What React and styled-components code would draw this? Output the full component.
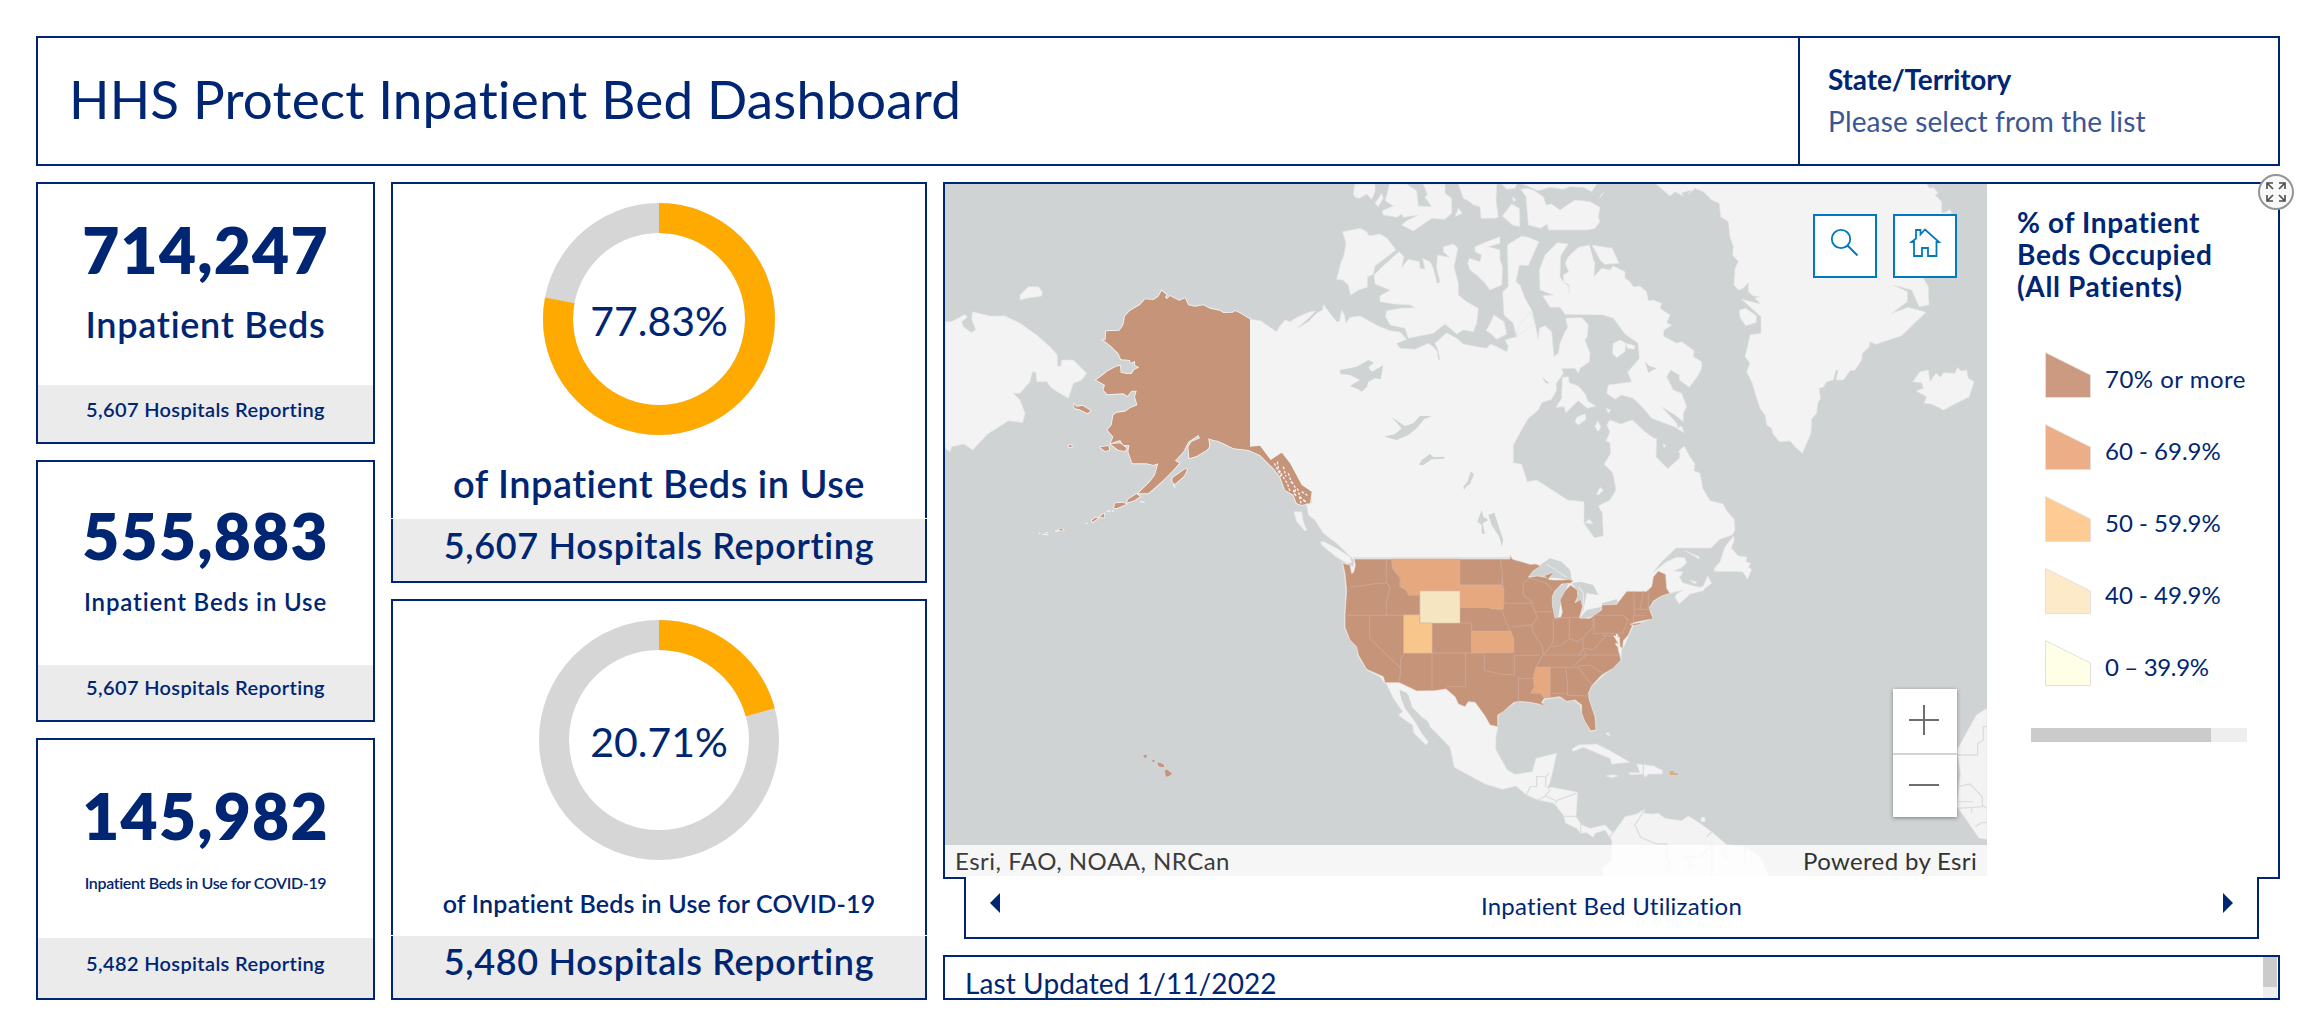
import React from "react";
import styled, { createGlobalStyle } from "styled-components";

const navy = "#002673";
const brown = "#c69479";
const water = "#cfd3d4";
const land = "#f3f3f3";

const Global = createGlobalStyle`
  * { box-sizing: border-box; }
  body { margin: 0; background: #fff; color: ${navy}; font-family: Lato, "Open Sans", sans-serif; }
`;

const Page = styled.div`
  width: 2308px;
  height: 1020px;
  padding: 36px 28px 20px 36px;
  display: flex;
  flex-direction: column;
  gap: 16px;
  overflow: hidden;
`;

const Text = styled.div`
  flex: none;
  white-space: nowrap;
  font-size: ${(p) => p.$size}px;
  font-weight: ${(p) => p.$weight || 400};
  line-height: ${(p) => p.$line || p.$size}px;
  letter-spacing: ${(p) => p.$track || 0}px;
  margin-top: ${(p) => p.$gap || 0}px;
  color: ${(p) => p.$color || "inherit"};
`;

const Box = styled.section`
  border: 2px solid ${navy};
  background: #fff;
`;

/* ---------- header ---------- */
const Header = styled(Box)`
  height: 130px;
  flex: none;
  display: flex;
`;
const TitleArea = styled.div`
  flex: 1;
  display: flex;
  align-items: center;
  padding: 0 0 5px 31px;
`;
const Selector = styled.div`
  width: 480px;
  border-left: 2px solid ${navy};
  padding: 25px 0 0 28px;
`;

/* ---------- columns ---------- */
const Body = styled.main`
  height: 818px;
  display: grid;
  grid-template-columns: 339px 536px 1337px;
  gap: 16px;
`;
const Column = styled.div`
  display: flex;
  flex-direction: column;
  gap: ${(p) => (p.$gap === undefined ? 16 : p.$gap)}px;
  min-width: 0;
`;
const Card = styled(Box)`
  flex: none;
  height: ${(p) => p.$height}px;
  display: flex;
  flex-direction: column;
  align-items: center;
  padding-top: ${(p) => p.$top}px;
`;
const Footer = styled.div`
  align-self: stretch;
  margin-top: auto;
  height: ${(p) => p.$height}px;
  padding-top: ${(p) => p.$top}px;
  background: #ebebeb;
  display: flex;
  justify-content: center;
  align-items: flex-start;
`;
const Rule = styled.div`
  align-self: stretch;
  height: 1px;
  margin: auto -2px 0;
  background: #fff;
  & + ${Footer} { margin-top: 0; }
`;
const Donut = styled.div`
  display: grid;
  place-items: center;
  width: ${(p) => p.$size}px;
  height: ${(p) => p.$size}px;
  > * { grid-area: 1 / 1; }
`;
const Percent = styled(Text)`
  padding-top: 2px;
`;

function Ring({ outer, inner, share }) {
  const r = (outer + inner) / 2;
  const c = 2 * Math.PI * r;
  return (
    <svg width={outer * 2} height={outer * 2} viewBox={`${-outer} ${-outer} ${outer * 2} ${outer * 2}`}>
      <circle r={r} fill="none" stroke="#d6d6d6" strokeWidth={outer - inner} />
      <circle r={r} fill="none" stroke="#ffaa00" strokeWidth={outer - inner}
        strokeDasharray={`${c * share} ${c}`} transform="rotate(-90)" />
    </svg>
  );
}

/* ---------- map ---------- */
const MapPanel = styled(Box)`
  position: relative;
  height: 697px;
  flex: none;
  display: flex;
`;
const MapView = styled.div`
  position: relative;
  width: 1042px;
  height: 692px;
  background: ${water};
  overflow: hidden;
`;
const MapSvg = styled.svg`
  display: block;
`;
const Tools = styled.div`
  position: absolute;
  top: 30px;
  right: 30px;
  display: flex;
  gap: 16px;
`;
const Tool = styled.button`
  width: 64px;
  height: 64px;
  padding: 0;
  border: 2px solid #0079c1;
  background: #fff;
  svg { display: block; margin: -2px; }
`;
const Zoom = styled.div`
  position: absolute;
  right: 30px;
  top: 505px;
  width: 64px;
  background: #fff;
  box-shadow: 0 1px 4px rgba(0, 0, 0, 0.4);
`;
const ZoomButton = styled.div`
  height: ${(p) => (p.$divided ? 66 : 62)}px;
  border-bottom: ${(p) => (p.$divided ? "2px solid #d4d4d4" : "0")};
  svg { display: block; }
`;
const Attribution = styled.div`
  position: absolute;
  left: 0;
  right: 0;
  bottom: 0;
  height: 31px;
  padding: 0 10px;
  display: flex;
  justify-content: space-between;
  align-items: center;
  background: rgba(255, 255, 255, 0.8);
`;
const Expand = styled.div`
  position: absolute;
  top: -10px;
  right: -16px;
  width: 36px;
  height: 36px;
  border-radius: 50%;
  border: 2px solid #959595;
  background: #f8f8f8;
  display: grid;
  place-items: center;
`;

const Legend = styled.aside`
  flex: 1;
  padding: 22px 0 0 30px;
`;
const LegendList = styled.div`
  margin: 37px 0 29px 28px;
`;
const LegendRow = styled.div`
  height: 72px;
  display: flex;
  align-items: center;
  gap: 14px;
`;
const LegendLabel = styled(Text)`
  padding-top: 8px;
`;
const HScroll = styled.div`
  width: 216px;
  height: 14px;
  margin-left: 14px;
  background: #eee;
  &::before { content: ""; display: block; width: 180px; height: 14px; background: #cbcbcb; }
`;
const Tab = styled.div`
  position: relative;
  flex: none;
  height: 62px;
  margin: -2px 21px 0;
  padding: 0 24px 2px;
  border: 2px solid ${navy};
  border-top: 0;
  background: #fff;
  display: flex;
  align-items: center;
  justify-content: space-between;
`;
const Arrow = styled.svg`
  margin-bottom: 6px;
`;
const Updated = styled(Box)`
  height: 45px;
  margin-top: 16px;
  display: flex;
  justify-content: space-between;
  padding: 0 1px 0 20px;
  overflow: hidden;
`;
const VScroll = styled.div`
  width: 14px;
  height: 41px;
  background: #eee;
  &::before { content: ""; display: block; height: 30px; background: #cbcbcb; }
`;

/* Coordinates of the basemap are in thirds of a pixel. */
const landShapes = [
  // North and Central America, South America
  "-150,418 -118,422 -100,435 -70,455 -62,440 -45,420 -30,425 -5,410 30,395 47,393 20,420 -10,445 0,440 25,425 50,400 68,390 70,373 90,400 110,425 118,425 125,390 133,405 138,430 150,412 180,408 235,438 270,452 300,456 320,478 290,490 300,505 345,508 385,490 400,500 412,515 415,540 420,540 415,512 405,490 440,458 470,475 490,492 530,500 560,505 572,492 590,500 620,515 625,500 615,480 650,470 655,440 690,395 705,430 715,480 718,445 735,437 755,455 762,530 775,520 780,490 795,455 803,443 797,415 845,412 865,435 862,470 855,480 870,520 868,545 840,565 835,580 825,565 785,566 790,580 768,612 770,630 755,658 725,668 715,690 685,715 670,740 640,795 640,848 665,853 682,905 710,900 803,960 852,965 852,1030 883,1073 910,1068 907,1000 895,978 930,960 948,930 938,878 912,853 932,820 930,788 918,783 930,755 920,735 930,720 962,732 997,720 1035,755 1062,775 1070,775 1068,830 1103,866 1138,835 1140,820 1135,815 1152,798 1170,830 1185,852 1182,872 1200,880 1208,925 1230,962 1270,972 1278,990 1303,1018 1305,1050 1297,1065 1260,1078 1233,1104 1128,1104 1085,1145 1057,1180 1075,1165 1100,1145 1130,1132 1155,1133 1160,1148 1145,1163 1120,1173 1148,1175 1145,1185 1138,1190 1148,1208 1170,1215 1200,1222 1210,1218 1223,1187 1235,1210 1215,1225 1210,1232 1170,1242 1138,1272 1125,1252 1130,1242 1150,1230 1110,1240 1085,1248 1060,1265 1047,1285 1060,1315 1020,1328 998,1340 985,1370 972,1400 965,1405 963,1440 940,1465 910,1485 875,1520 866,1540 870,1570 886,1610 888,1652 872,1655 855,1625 845,1600 840,1575 820,1560 800,1565 780,1552 755,1555 735,1558 725,1575 690,1567 650,1565 635,1575 595,1605 593,1645 588,1670 587,1708 622,1770 645,1783 697,1775 708,1735 770,1720 757,1780 748,1812 740,1825 757,1822 833,1837 828,1910 845,1935 870,1945 915,1935 930,1950 940,1960 975,1910 1010,1902 1035,1887 1032,1900 1055,1902 1075,1900 1095,1915 1145,1922 1165,1908 1200,1930 1235,1955 1279,1993 1334,2000 1380,2030 1407,2088 908,2088 908,2065 935,2040 935,1980 915,1950 885,1960 880,1972 860,1958 842,1960 830,1945 797,1930 790,1905 762,1870 715,1860 680,1845 648,1818 608,1828 555,1812 463,1762 450,1702 410,1660 390,1640 385,1625 365,1610 335,1580 325,1545 300,1530 305,1560 315,1585 345,1625 365,1660 385,1685 378,1695 342,1660 338,1635 315,1620 295,1605 308,1595 280,1555 260,1512 253,1508 240,1490 200,1470 172,1425 172,1400 150,1380 133,1342 134,1305 138,1230 133,1180 126,1148 160,1160 162,1140 110,1090 70,1060 45,1020 25,1005 20,975 35,970 35,935 0,910 -50,820 -90,840 -120,797 -150,800",
  // Vancouver Island, Haida Gwaii
  "62,1085 72,1085 110,1105 150,1130 155,1148 140,1150 105,1128 65,1095",
  "-18,995 5,995 10,1025 20,1050 15,1053 -10,1025",
  // Arctic Canada
  "128,155 165,148 180,145 200,155 207,168 240,162 262,175 288,210 225,258 220,283 203,290 202,322 175,330 152,345 145,315 128,300 110,298 122,250 132,225 138,190",
  "297,215 312,230 305,262 325,238 358,245 360,265 375,268 368,235 390,245 400,265 412,312 420,305 410,265 412,225 448,232 430,215 430,200 460,192 474,205 462,260 475,310 475,345 500,365 535,385 530,430 520,455 490,450 470,462 435,432 400,460 325,475 315,445 270,435 257,410 260,392 300,385 345,383 330,375 280,372 240,365 240,348 270,330 225,312 222,285 245,262",
  "525,200 560,185 600,170 600,190 565,200 600,210 600,240 608,260 605,315 570,330 555,310 530,285 510,270 503,250 508,235 540,245 545,225 525,215",
  "622,195 665,168 685,172 717,185 685,257 658,255 648,305 660,315 675,355 695,390 705,430 650,470 640,430 612,405 608,335 625,320",
  "568,435 582,405 612,425 620,462 590,478 572,460 558,452",
  "160,40 165,12 225,12 225,35 215,58 200,42 178,55 165,52", "245,40 250,55 235,80 225,70",
  "262,40 268,12 320,12 350,32 355,78 395,80 375,52 382,42 370,12 435,12 435,40 455,55 455,100 435,118 395,115 340,153 305,135 320,122 355,105 310,112 305,102 290,112 250,105 247,92 280,78 255,62",
  "475,12 590,12 588,60 595,112 583,115 543,115 540,80 520,75 510,65 490,55", "475,85 487,100 465,110",
  "635,72 658,85 660,140 637,135 607,108", "605,12 650,12 645,25 620,28", "637,50 648,60 640,65",
  "662,28 680,25 700,30 730,50 738,75 755,72 780,90 825,60 870,65 900,82 895,110 900,125 885,145 865,150 745,150 742,132 722,145 685,135 678,50",
  "668,12 890,12 875,35 850,22 810,20 790,28 750,22 715,32", "912,38 898,55 905,42",
  "735,225 772,188 805,192 782,228 780,290 790,305 808,320 808,340 808,315 790,305 790,285 806,275 795,250 805,230 835,202 868,195 885,240 882,290 905,265 930,270 940,258 975,275 975,295 990,305 1000,320 1020,318 1040,335 1045,362 1060,360 1085,370 1080,385 1110,405 1100,428 1115,435 1092,450 1090,468 1130,490 1145,485 1182,512 1180,530 1205,545 1205,565 1192,590 1168,622 1138,600 1138,585 1112,570 1100,590 1120,630 1145,640 1160,680 1150,700 1150,725 1125,705 1085,680 1130,730 1135,745 1055,715 1035,690 1000,655 965,645 945,658 920,640 925,615 995,605 983,577 1018,535 1014,490 975,462 940,415 910,405 795,403 780,382 750,382 728,347 760,345 720,330 718,270",
  "875,195 937,205 957,250 915,253 900,240 890,220",
  "787,592 805,590 808,608 835,618 858,645 862,662 887,678 862,685 835,662 797,698 793,680 768,682 785,655",
  "825,725 830,712 855,702 858,718 835,735", "885,740 893,722 903,740 895,755", "940,490 960,480 978,490 975,515 950,533 937,520",
  "978,490 1005,497 1003,508 982,505", "890,942 900,922 910,930 895,946", "855,1028 868,1018 880,1032", "918,685 932,690 925,700", "1130,745 1145,738 1152,758",
  "1088,792 1097,795 1093,803",
  // Gulf of St Lawrence
  "1155,1112 1198,1130 1197,1137", "1168,1200 1190,1205 1185,1212",
  "1300,1068 1303,1080 1294,1105 1315,1128 1340,1130 1338,1145 1352,1150 1345,1162 1355,1168 1343,1198 1328,1175 1243,1174 1243,1165 1260,1145 1275,1100",
  // Greenland
  "1068,12 1110,48 1125,35 1150,48 1145,38 1175,30 1165,42 1185,25 1210,35 1235,60 1258,70 1262,110 1285,125 1290,170 1300,200 1298,225 1315,245 1305,265 1302,315 1315,330 1330,325 1345,308 1345,335 1360,348 1380,350 1365,355 1382,372 1325,358 1383,410 1383,460 1350,465 1345,490 1335,530 1350,550 1340,575 1358,612 1370,655 1380,685 1395,705 1400,735 1415,745 1418,760 1438,785 1470,783 1490,805 1507,820 1533,760 1535,717 1550,700 1553,670 1562,655 1557,625 1570,622 1580,605 1600,600 1607,572 1615,570 1608,600 1630,600 1650,572 1665,570 1685,540 1687,520 1708,500 1708,485 1728,493 1805,467 1845,428 1878,397 1825,382 1775,400 1822,365 1822,335 1780,315 1800,320 1835,330 1858,380 1887,375 1885,320 1870,295 1860,250 1880,160 1926,105 1955,100 1950,88 1935,98 1925,98 1925,65 1905,45 1915,40 1900,22 1888,25 1880,12",
  "1318,390 1337,385 1370,408 1368,428 1337,437 1320,412",
  // Iceland
  "1838,605 1860,575 1885,570 1890,605 1908,580 1922,592 1930,578 1965,580 1973,562 1982,573 2000,570 2005,595 2022,605 2008,650 1930,690 1895,672 1872,670 1880,650 1848,633 1870,625 1865,608",
  // Chukotka, Wrangel Island
  "-1065,425 -1045,425 -1005,403 -998,412 -1015,425 -1010,440 -985,458 -973,448 -985,418 -983,395 -930,408 -885,408 -840,430 -790,465 -750,500 -728,525 -728,558 -718,560 -715,540 -680,540 -640,580 -655,600 -680,610 -688,635 -695,655 -745,625 -760,605 -790,605 -792,577 -803,575 -810,605 -840,640 -860,640 -840,660 -825,700 -832,728 -875,722 -938,763 -982,810 -1008,792 -1045,800 -1050,815 -1065,805",
  "-840,345 -815,320 -785,320 -773,335 -775,348 -820,355 -840,360",
  // Caribbean
  "815,1708 835,1695 890,1692 930,1712 990,1747 935,1752 930,1735 905,1725 850,1702 820,1714", "985,1778 1020,1778 1010,1752 1060,1757 1088,1772 1086,1782 1045,1782 1037,1792 1030,1782 990,1784", "918,1788 940,1784 955,1788 935,1793", "1203,1912 1215,1912 1215,1925 1203,1925", "918,1662 925,1656 930,1668",
  // West Africa
  "2061,1585 2029,1605 1971,1710 1981,1780 1971,1880 2000,1920 2037,1975 2061,1978",
];

const waterShapes = [
  "120,570 170,560 205,540 222,548 205,562 215,575 250,556 245,580 242,598 225,595 205,605 200,622 185,635 175,628 150,618 180,600 150,585 122,582",
  "275,712 315,738 340,730 360,708 395,708 372,718 350,745 325,765 290,780 252,770 285,762 305,745",
  "357,855 365,840 390,822 400,832 433,830 433,836 395,838 370,855", "512,875 522,882 510,912 500,918 492,930 490,920 502,905",
  "565,1005 583,998 600,1050 610,1080 605,1100 598,1070 575,1035", "545,990 550,1010 565,1020 548,1030 555,1062 545,1060 545,1035 532,1025",
  "1035,545 1048,558 1070,565 1045,578", "725,590 748,610 738,610",
  "685,1190 700,1172 720,1155 750,1135 785,1145 810,1170 815,1200 775,1195 740,1192 725,1190 690,1188",
  "758,1250 768,1230 795,1208 805,1212 790,1245 780,1280 775,1310 762,1315 757,1270", "815,1210 840,1205 880,1215 895,1245 860,1240 852,1280 825,1260 832,1230",
  "838,1316 860,1290 905,1280 900,1295 870,1312", "905,1270 950,1258 955,1270 910,1277", "298,1530 320,1538 335,1575 325,1583 305,1560",
];

const alaska = [
  "930,418 900,400 885,393 878,398 850,399 840,392 810,386 790,376 765,380 745,376 735,355 718,362 690,348 680,358 675,350 680,345 665,332 655,350 640,360 615,358 600,375 570,392 555,408 550,435 538,452 498,454 497,480 488,478 515,500 535,520 543,538 570,540 572,548 585,543 585,556 598,562 582,570 575,582 560,582 542,578 540,557 528,560 500,575 485,588 468,600 495,615 490,630 502,643 550,640 562,648 575,632 590,632 585,650 592,675 570,685 555,695 530,698 520,705 515,735 502,750 520,770 512,790 540,780 550,795 568,795 565,815 577,850 620,850 640,855 655,850 645,885 630,905 595,940 625,940 650,918 670,900 700,870 718,850 705,842 730,815 745,785 775,765 780,775 755,785 745,800 748,835 770,828 800,810 808,800 805,775 820,780 835,783 850,790 880,805 925,810 960,825 1000,865 1020,890 1035,930 1060,945 1070,970 1085,975 1110,970 1115,935 1085,915 1050,850 1025,818 992,840 960,797 930,800",
  "512,792 540,790 560,805 555,813 535,810", "480,802 505,798 508,810 495,813", "402,672 410,680 428,677 452,692 442,700 418,688 404,685", "385,796 395,796 395,801 388,801",
  "698,893 735,868 742,868 732,888 705,912 697,905", "590,942 565,958 560,968 580,962 600,950", "525,970 548,968 560,972 530,985 522,984", "492,1000 480,1010 493,1013", "455,1022 465,1013 475,1014 458,1026", "356,1050 364,1045 371,1052", "318,1060 322,1058 322,1064",
];

const usa = [
  "163,57 630,57 630,45 638,58 668,66 690,73 708,72 722,78 700,92 685,112 712,108 740,112 725,110 762,96 745,118 760,120 785,120 808,118 820,122 812,130 785,132 765,152 757,170 757,195 765,235 782,232 787,215 780,180 795,152 812,135 832,150 833,170 825,188 842,178 848,200 838,234 870,235 905,210 905,195 950,193 980,154 1040,154 1055,140 1060,110 1075,93 1097,103 1100,145 1110,160 1085,168 1060,183 1047,205 1060,237 1040,240 1000,248 995,262 985,285 970,302 968,325 960,320 958,290 952,285 955,330 963,360 940,385 905,405 875,438 865,460 868,480 885,530 888,570 872,572 855,545 845,520 845,495 825,480 800,484 780,470 755,473 733,475 725,487 735,498 715,492 690,487 655,484 640,488 610,515 593,525 593,560 570,555 555,528 525,487 505,485 495,500 475,492 465,470 438,447 405,452 350,453 298,428 255,428 250,410 200,388 175,345 170,320 150,300 135,262 135,225 140,150 135,100 128,70 150,75 155,100 160,98 166,78",
  "990,252 1020,248 1025,252 1000,257",
];
const stateColors = [
  ["#e5a87f", "275,57 479,57 479,153 360,153 360,165 326,165 318,150 300,140 303,115 278,85"],
  ["#e5a87f", "480,135 605,135 612,150 610,208 575,207 565,203 480,202"],
  ["#f5e5c0", "360,153 480,153 480,249 360,249"],
  ["#f8c58b", "311,225 359,225 359,249 396,249 396,339 311,339"],
  ["#e5a87f", "515,274 632,274 641,295 641,338 515,338"],
  ["#e5a87f", "708,382 750,382 750,470 730,472 722,460 692,460 703,440 700,410"],
];
const stateLines =
  "M259 57V128L225 131 150 142 M259 128L270 142 259 190V226 M136 226H311 M209 226V295L302 385V355L311 345V225H359V165 M275 57L278 85 300 115V140L318 145 326 165H360V153H480 M302 385L298 428 M311 339H553 M396 249V452 M396 249H515V339 M479 57V249 M601 57L607 100 605 135H480 M607 100L612 190H695 M480 202H565L605 210 620 250 632 274H515 M497 340V440H440 M553 345V392L605 403 643 405V346H720 M641 295V339 M655 408V485 M655 416H702 M632 260L695 255 M670 165V128L690 115 M670 165L695 185 700 205 708 215H757 M700 205L712 230 695 257 700 280 725 315 730 340 720 360 708 382H835 M690 115L740 130 757 150 M760 235V300L755 315 730 345H960 M808 232V295L785 315 757 320 M765 235L808 232H838 M808 295L830 305 848 295 880 260V235 M848 295L850 325 835 346 M882 226H970L985 240 975 262 968 280H882V226 M850 325L880 330 905 300 920 285 M905 285L960 290 M850 330L860 345 820 377 M750 382V470 M797 382L803 440V466L865 468 M755 460H803 M835 382L875 435 M835 378L870 375 910 400 M1002 154V215L1000 245 M1030 154L1020 208 M1045 150V208 M1002 208H1050 M1002 227H1040";
const borderLines =
  "M160 1134H630 M680 1845L690 1820H710V1790H737 M737 1790V1822 M748 1780L737 1790 M715 1860L735 1848 752 1828 M735 1848L768 1862 770 1870 M768 1862L830 1840 M792 1909H828 M842 1930V1960 M928 1975L942 1950 M1030 1752V1790 M1035 1887L1005 1935 1022 1972 1070 1992H1100V2030L1110 2050 1098 2070 M1235 1955L1220 1970 M1155 2030L1175 2055 1155 2070 M1155 2030H1200L1235 1995V2088 M1335 2000V2050 M1280 1993L1270 2020 1285 2040 M1972 1725H2033V1690L2050 1680V1640H2061 M1972 1820L2010 1812 2047 1850V1875L2061 1885 M1972 1865H2020 M1972 1885L2050 1880 M2015 1885V1900 M2026 1940L2045 1928H2061";

const speckles = "M1003 850l20 40M1012 845l4 25 10 12M1030 860l8 30M1022 880l20 30 8 25M1045 880l10 30M1055 905l12 20-4 20M1072 925l8 25 15 15M1085 935l18 12M1078 950l5 20M1092 960l10 12M1060 930l8 18";

const Poly = ({ pts }) => <path d={"M" + pts.join("ZM") + "Z"} />;

function WorldMap() {
  return (
    <MapSvg width="1042" height="692" viewBox="945 184 1042 692">
      <g transform="translate(1300 180) scale(.333333)">
        <g fill={land} stroke="#e4e6e6" strokeWidth="2"><Poly pts={landShapes} /></g>
        <g fill={water}><Poly pts={waterShapes} /></g>
        <path d="M790 408L850 410 910 408 M872 195L884 245" fill="none" stroke={water} strokeWidth="5" />
        <path d={borderLines} fill="none" stroke="#dcdedd" strokeWidth="4" />
        <path d="M740 1152L800 1192M835 1220L850 1240V1290L835 1315" fill="none" stroke="#e2e4e4" strokeWidth="4" />
      </g>
      <g transform="translate(940 180) scale(.333333)">
        <g fill={brown} stroke={land} strokeWidth="5" strokeLinejoin="round" paintOrder="stroke"><Poly pts={alaska} /></g>
        <path d={speckles} fill="none" stroke={land} strokeWidth="4" strokeDasharray="8 5" />
        <path d="M296 1060h5M308 1063h14M345 1053h10M500 995l12-3M516 994l6-2M437 1030h6M600 965l14 2M700 915l6 8" stroke={land} strokeWidth="4" fill="none" />
      </g>
      <g transform="translate(1300 540) scale(.333333)">
        <g fill={brown} stroke="#e8e2de" strokeWidth="2"><Poly pts={usa} /></g>
        <path d={stateLines} fill="none" stroke="#cba592" strokeWidth="3.2" />
        {stateColors.map(([fill, d]) => <path key={d} d={`M${d}Z`} fill={fill} stroke="#d8b7a0" strokeWidth="1.5" />)}
        <path d="M943 287l8 12M950 282l2 22M947 310l8 10" stroke={land} strokeWidth="5" fill="none" />
        <path d="M1109 693H1122V699H1134V705H1110Z" fill="#e2ae7c" />
      </g>
      <g fill={brown}>
        <path d="M1143 756l3-1.500 1 2-2 1.500zM1152.500 760h1.800v2h-1.800zM1157.500 762.500l3 .5 3.500 2v2h-3l-2.500-1zM1164.500 770.500l3-.8 2 2 2.700 1.500-3 2.700-3 .8z" />
      </g>
    </MapSvg>
  );
}

const legend = [
  ["#cb9a80", "70% or more", 0.5],
  ["#ecae87", "60 - 69.9%", 0],
  ["#ffcb94", "50 - 59.9%", 0],
  ["#fdeac8", "40 - 49.9%", 0],
  ["#ffffe8", "0 – 39.9%", -0.35],
];

const Stat = ({ top, value, label, size, line, gap, track, footer, fh, ft }) => (
  <Card $height={262} $top={top}>
    <Text $size={64} $weight={800} $track={1.2}>{value}</Text>
    <Text $size={size} $weight={600} $line={line} $gap={gap} $track={track}>{label}</Text>
    <Footer $height={fh} $top={ft}><Text $size={20} $weight={600} $line={24} $track={0.35}>{footer}</Text></Footer>
  </Card>
);

const Gauge = ({ outer, inner, share, label, size, line, gap, track, footer, ft }) => (
  <Card $height={401} $top={19}>
    <Donut $size={outer * 2}>
      <Ring outer={outer} inner={inner} share={share} />
      <Percent $size={41}>{(share * 100).toFixed(2)}%</Percent>
    </Donut>
    <Text $size={size} $weight={600} $line={line} $gap={gap} $track={track}>{label}</Text>
    <Rule />
    <Footer $height={62} $top={ft}><Text $size={36} $weight={600} $line={40} $track={0.65}>{footer}</Text></Footer>
  </Card>
);

export default function App() {
  return (
    <>
      <Global />
      <Page>
        <Header as="header">
          <TitleArea><Text $size={53} $line={60} $track={0.18}>HHS Protect Inpatient Bed Dashboard</Text></TitleArea>
          <Selector>
            <Text $size={28} $weight={700} $line={32} $track={-0.15}>State/Territory</Text>
            <Text $size={28} $line={32} $gap={10} $track={0.15} $color="#3a5695">Please select from the list</Text>
          </Selector>
        </Header>
        <Body>
          <Column>
            <Stat top={34} value="714,247" label="Inpatient Beds" size={36} line={40} gap={22} track={0.7} footer="5,607 Hospitals Reporting" fh={57} ft={12} />
            <Stat top={42} value="555,883" label="Inpatient Beds in Use" size={24} line={28} gap={20} track={0.85} footer="5,607 Hospitals Reporting" fh={55} ft={10} />
            <Stat top={44} value="145,982" label="Inpatient Beds in Use for COVID-19" size={16} line={20} gap={25} track={-0.35} footer="5,482 Hospitals Reporting" fh={60} ft={13} />
          </Column>
          <Column>
            <Gauge outer={116} inner={86} share={0.7783} label="of Inpatient Beds in Use" size={38} line={44} gap={26} track={0.5} footer="5,607 Hospitals Reporting" ft={6} />
            <Gauge outer={120} inner={90} share={0.2071} label="of Inpatient Beds in Use for COVID-19" size={25} line={30} gap={28} track={0.22} footer="5,480 Hospitals Reporting" ft={5} />
          </Column>
          <Column $gap={0}>
            <MapPanel>
              <MapView>
                <WorldMap />
                <Tools>
                  <Tool aria-label="Search">
                    <svg width="64" height="64" fill="none" stroke="#0079c1" strokeWidth="1.8">
                      <circle cx="28" cy="25" r="9.2" />
                      <path d="M34.5 31.500L44.500 41.500" strokeWidth="2" />
                    </svg>
                  </Tool>
                  <Tool aria-label="Home">
                    <svg width="64" height="64" fill="none" stroke="#0079c1" strokeWidth="1.8">
                      <path d="M18.500 28H21V42H29V34H35V42H43.500V28H46L32 15.500 27.500 20.500V16H23V24.500Z" />
                    </svg>
                  </Tool>
                </Tools>
                <Zoom>
                  <ZoomButton $divided>
                    <svg width="64" height="64" stroke="#6e6e6e" strokeWidth="2"><path d="M16 31H46M31 16V46" /></svg>
                  </ZoomButton>
                  <ZoomButton>
                    <svg width="64" height="62" stroke="#6e6e6e" strokeWidth="2"><path d="M16 30H46" /></svg>
                  </ZoomButton>
                </Zoom>
                <Attribution>
                  <Text $size={24} $line={28} $track={0.5} $color="#3c3c3c">Esri, FAO, NOAA, NRCan</Text>
                  <Text $size={24} $line={28} $track={0.35} $color="#323232">Powered by Esri</Text>
                </Attribution>
              </MapView>
              <Legend>
                <Text $size={28} $weight={700} $line={32} $track={0.65}>% of Inpatient<br />Beds Occupied<br />(All Patients)</Text>
                <LegendList>
                  {legend.map(([fill, label, track]) => (
                    <LegendRow key={label}>
                      <svg width="46" height="46"><path d="M.5 .5L45.500 23V45.500H.5Z" fill={fill} stroke="#e6dfdb" /></svg>
                      <LegendLabel $size={24} $line={28} $track={track}>{label}</LegendLabel>
                    </LegendRow>
                  ))}
                </LegendList>
                <HScroll />
              </Legend>
              <Expand>
                <svg width="20" height="20" fill="none" stroke="#4c4c4c" strokeWidth="1.600">
                  <path d="M1 7V1H7M1 1L7 7M13 1H19V7M19 1L13 7M1 13V19H7M1 19L7 13M19 13V19H13M19 19L13 13" />
                </svg>
              </Expand>
            </MapPanel>
            <Tab>
              <Arrow width="10" height="20"><path d="M10 0V20L0 10Z" fill={navy} /></Arrow>
              <Text $size={24} $line={28} $track={0.25}>Inpatient Bed Utilization</Text>
              <Arrow width="10" height="20"><path d="M0 0V20L10 10Z" fill={navy} /></Arrow>
            </Tab>
            <Updated>
              <Text $size={28} $line={32} $gap={10} $track={0.1}>Last Updated 1/11/2022</Text>
              <VScroll />
            </Updated>
          </Column>
        </Body>
      </Page>
    </>
  );
}
